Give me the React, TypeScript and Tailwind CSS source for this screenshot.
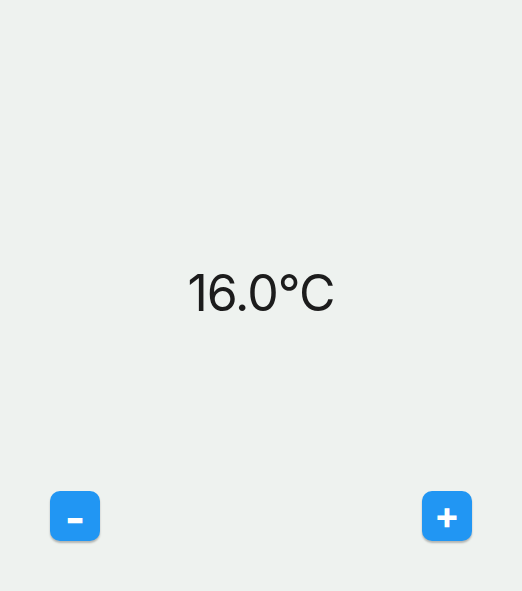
import { useState } from "react";

export default function App() {
  const [temp, setTemp] = useState(16);

  return (
    <div className="flex h-[591px] w-full flex-col bg-[#eef2ef] font-['Inter','Liberation_Sans',sans-serif]">
      <div className="flex flex-1 items-center justify-center pt-[95px]">
        <span className="text-[50px] font-normal leading-none tracking-[-1px] text-[#1c1c1c]">
          {temp.toFixed(1)}°C
        </span>
      </div>
      <div className="flex items-center justify-between px-[50px] pb-[50px]">
        <button
          type="button"
          onClick={() => setTemp((t) => t - 0.5)}
          className="flex size-[50px] items-center justify-center rounded-[10px] bg-[#2196f3] pt-[4px] text-[44px] font-bold leading-none text-white shadow-[0_2px_2px_rgba(0,0,0,0.25)]"
        >
          -
        </button>
        <button
          type="button"
          onClick={() => setTemp((t) => t + 0.5)}
          className="flex size-[50px] items-center justify-center rounded-[10px] bg-[#2196f3] pb-[2px] text-[38px] font-bold leading-none text-white shadow-[0_2px_2px_rgba(0,0,0,0.25)]"
        >
          +
        </button>
      </div>
    </div>
  );
}
